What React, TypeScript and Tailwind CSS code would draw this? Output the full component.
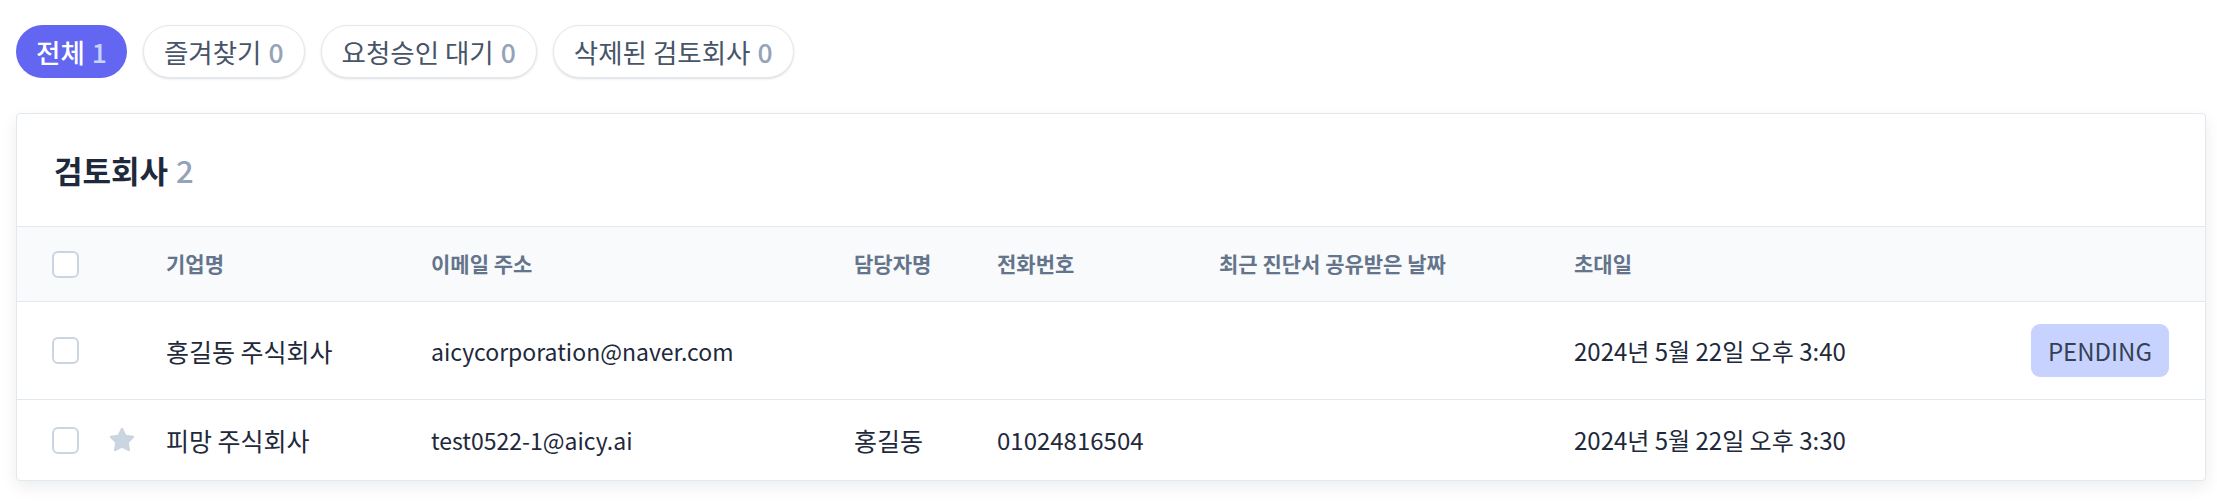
import { Star } from 'lucide-react'

const tabs = [
  { label: '전체', count: 1, active: true },
  { label: '즐겨찾기', count: 0, active: false },
  { label: '요청승인 대기', count: 0, active: false },
  { label: '삭제된 검토회사', count: 0, active: false },
]

const rows = [
  {
    id: 1,
    name: '홍길동 주식회사',
    email: 'aicycorporation@naver.com',
    manager: '',
    phone: '',
    shared: '',
    invited: '2024년 5월 22일 오후 3:40',
    starred: false,
    pending: true,
  },
  {
    id: 2,
    name: '피망 주식회사',
    email: 'test0522-1@aicy.ai',
    manager: '홍길동',
    phone: '01024816504',
    shared: '',
    invited: '2024년 5월 22일 오후 3:30',
    starred: true,
    pending: false,
  },
]

const cols = 'grid grid-cols-[91px_58px_265px_423px_143px_222px_355px_1fr_auto] items-center'

function Checkbox() {
  return <span className="block w-[27px] h-[27px] rounded-[6px] border-[2px] border-[#cbd5e1] bg-white" />
}

export default function App() {
  return (
    <div className="min-h-screen bg-white pl-[16px] pr-[11px] pt-[25px] font-['Noto_Sans_CJK_KR','Noto_Sans',sans-serif]">
      <div className="flex items-center gap-[16px]">
        {tabs.map(tab => (
          <button
            key={tab.label}
            className={`h-[53px] px-[20px] rounded-full text-[26.5px] leading-[36px] flex items-center gap-[7px] ${
              tab.active
                ? 'bg-[#6366f1] text-white font-medium'
                : 'bg-white border-[1.5px] border-[#e2e8f0] text-[#475569] shadow-sm'
            }`}
          >
            <span>{tab.label}</span>
            <span className={tab.active ? 'text-[#c7d2fe] font-medium' : 'text-[#94a3b8] font-medium'}>{tab.count}</span>
          </button>
        ))}
      </div>

      <div className="mt-[35px] bg-white border-[1.5px] border-[#e2e8f0] rounded-[4px] shadow-[0_6px_16px_rgba(15,23,42,0.08)]">
        <div className="h-[112px] flex items-center pl-[37px]">
          <h2 className="text-[31px] font-bold text-[#1e293b] flex items-center gap-[8px]">
            검토회사 <span className="text-[#94a3b8] font-medium">2</span>
          </h2>
        </div>

        <div className={`${cols} h-[76px] bg-[#f8fafc] border-y-[1.5px] border-[#e2e8f0] text-[21px] font-semibold text-[#64748b]`}>
          <div className="pl-[35px]"><Checkbox /></div>
          <div />
          <div>기업명</div>
          <div>이메일 주소</div>
          <div>담당자명</div>
          <div>전화번호</div>
          <div>최근 진단서 공유받은 날짜</div>
          <div>초대일</div>
          <div className="w-[172px]" />
        </div>

        {rows.map((row, i) => (
          <div
            key={row.id}
            className={`${cols} py-[22px] text-[24px] leading-[36px] text-[#1e293b] ${
              i < rows.length - 1 ? 'border-b-[1.5px] border-[#e2e8f0]' : ''
            }`}
          >
            <div className="pl-[35px]"><Checkbox /></div>
            <div>
              {row.starred && <Star size={28} className="fill-[#cbd5e1] text-[#cbd5e1]" strokeWidth={1} />}
            </div>
            <div className="text-[25px]">{row.name}</div>
            <div className="text-[23px]">{row.email}</div>
            <div className="text-[25px]">{row.manager}</div>
            <div>{row.phone}</div>
            <div>{row.shared}</div>
            <div>{row.invited}</div>
            <div className="w-[172px] pr-[36px] flex justify-end">
              {row.pending && (
                <span className="h-[53px] px-[17px] flex items-center rounded-[9px] bg-[#c7d2fe] text-[#334155]">
                  PENDING
                </span>
              )}
            </div>
          </div>
        ))}
      </div>
    </div>
  )
}
